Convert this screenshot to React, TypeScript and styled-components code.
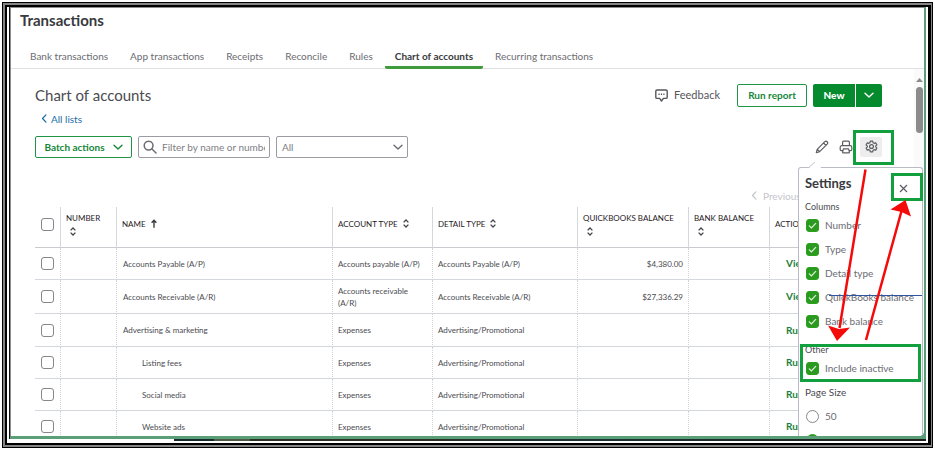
import React from "react";
import styled, { createGlobalStyle, css } from "styled-components";

const GlobalStyle = createGlobalStyle`
  *, *::before, *::after { box-sizing: border-box; }
  body { margin: 0; background: #fff; }
  body, button, input, select { font-family: Lato, "Open Sans", sans-serif; }
  button, input, select { margin: 0; padding: 0; }
`;

const Page = styled.div`
  height: 100vh;
  padding: 2px 2px 3px;
  display: flex;
`;

const OuterFrame = styled.div`
  flex: 1;
  min-width: 0;
  display: flex;
  border: 1px solid #000;
  padding: 2px 1px 2px 2px;
  background: #858585;
`;

const InnerFrame = styled.div`
  flex: 1;
  min-width: 0;
  display: flex;
  flex-direction: column;
  border: solid #000;
  border-width: 2px 3px 2px 2px;
  padding: 0 2px 2px;
  background: #fff;
`;

const Window = styled.main`
  position: relative;
  flex: 1;
  min-height: 0;
  display: flex;
  flex-direction: column;
  overflow: hidden;
  border-left: 1px solid #111;
  background: #5b9f78;
  padding: 0 2px 3px 0;
`;

const Screen = styled.div`
  flex: 1;
  min-height: 0;
  display: flex;
  flex-direction: column;
  position: relative;
  overflow: hidden;
  background: #fff;
  border: solid #8c8c8c;
  border-width: 1px 0 0 1px;
  border-bottom-right-radius: 5px;
`;

const Taskbar = styled.div`
  height: 2px;
  margin-left: 165px;
  background: linear-gradient(90deg, #122a2c 0 40px, #4c5a44 40px 76px, #2b2f25 76px 35%, #1b3436 50%, #20201c);
`;

const PageTitle = styled.h1`
  margin: 0;
  padding: 2px 9px 1px;
  font-size: 15px;
  line-height: 20px;
  font-weight: 700;
  color: #393a3d;
`;

const Tabs = styled.nav`
  display: flex;
  gap: 2px;
  height: 38px;
  padding-left: 9px;
  border-bottom: 1px solid #dfe0e2;
`;

const Tab = styled.a<{ $active?: boolean }>`
  height: 38px;
  padding: 17px 10px 0;
  font-size: 10px;
  line-height: 16px;
  white-space: nowrap;
  text-decoration: none;
  color: #6b6c72;
  border-bottom: 3px solid transparent;
  ${(p) =>
    p.$active &&
    css`
      color: #393a3d;
      font-weight: 700;
      border-bottom-color: #3f9b3b;
      border-radius: 0 0 2px 2px;
    `}
`;

const Body = styled.section`
  flex: 1;
  min-height: 0;
  display: flex;
`;

const Content = styled.div`
  flex: 1;
  min-width: 0;
  padding: 14px 32px 0 24px;
  overflow: hidden;
`;

const Scrollbar = styled.div`
  width: 10px;
  display: flex;
  flex-direction: column;
  align-items: center;
  gap: 4px;
  padding-top: 8px;
  background: #fafafa;
`;

const Thumb = styled.div`
  width: 7px;
  height: 46px;
  border-radius: 4px;
  background: #8b8b8b;
`;

const Row = styled.div`
  display: flex;
  align-items: center;
`;

const HeadingRow = styled(Row)`
  height: 24px;
`;

const Heading = styled.h2`
  margin: 0;
  flex: 1;
  font-size: 15px;
  line-height: 24px;
  font-weight: 400;
  color: #4a4b50;
`;

const FeedbackButton = styled.button`
  display: flex;
  align-items: center;
  gap: 6px;
  margin-right: 17px;
  border: 0;
  background: none;
  color: #55565b;
  font-size: 11px;
  line-height: 16px;
`;

const OutlineButton = styled.button<{ $width: number; $tall?: boolean }>`
  display: flex;
  align-items: center;
  justify-content: center;
  gap: 8px;
  width: ${(p) => p.$width}px;
  height: ${(p) => (p.$tall ? 23 : 22)}px;
  border: 1px solid #1f9444;
  border-radius: 2px;
  background: #fff;
  color: #16873a;
  font-size: 10px;
  font-weight: 700;
  white-space: nowrap;
`;

const SplitButton = styled.div`
  display: flex;
  gap: 1px;
  height: 23px;
  margin-left: 6px;
  border-radius: 2px;
  overflow: hidden;
`;

const SolidButton = styled.button<{ $width: number }>`
  display: flex;
  align-items: center;
  justify-content: center;
  width: ${(p) => p.$width}px;
  border: 0;
  background: #068a2e;
  color: #fff;
  font-size: 10px;
  font-weight: 900;
`;

const BackLink = styled.a`
  display: inline-flex;
  align-items: center;
  gap: 2px;
  margin: 3px 0 0 5px;
  font-size: 10px;
  line-height: 16px;
  text-decoration: none;
  color: #1b6fa5;
`;

const Toolbar = styled(Row)`
  gap: 6px;
  margin-top: 9px;
  height: 22px;
`;

const Field = styled.label`
  display: flex;
  align-items: center;
  gap: 5px;
  width: 132px;
  height: 22px;
  padding: 0 4px;
  border: 1px solid #9a9ca1;
  border-radius: 2px;
  color: #6b6c72;
`;

const SearchInput = styled.input`
  flex: 1;
  min-width: 0;
  border: 0;
  outline: 0;
  background: none;
  font-size: 10px;
  &::placeholder { color: #7d7e83; opacity: 1; }
`;

const Select = styled.select`
  flex: 1;
  appearance: none;
  border: 0;
  outline: 0;
  background: none;
  color: #7d7e83;
  font-size: 10px;
  padding-left: 1px;
`;

const ToolIcons = styled(Row)`
  margin-left: auto;
  gap: 10px;
  color: #5d5e63;
`;

const IconButton = styled.button<{ $filled?: boolean }>`
  display: flex;
  align-items: center;
  justify-content: center;
  border: 0;
  background: none;
  color: inherit;
  ${(p) =>
    p.$filled &&
    css`
      width: 22px;
      height: 20px;
      margin-left: -3px;
      border-radius: 2px;
      background: #ededed;
    `}
`;

const Pager = styled(Row)`
  justify-content: flex-end;
  height: 16px;
  margin-top: 30px;
`;

const PagerButton = styled.button`
  display: flex;
  align-items: center;
  gap: 4px;
  width: 132px;
  border: 0;
  background: none;
  color: #c3c5c9;
  font-size: 10px;
  line-height: 16px;
`;

const Table = styled.table`
  width: 100%;
  margin-top: 3px;
  table-layout: fixed;
  border-collapse: separate;
  border-spacing: 0;
  color: #4a4b50;
  font-size: 8px;
  line-height: 12px;
`;

const Col = styled.col<{ $width?: number }>`
  width: ${(p) => (p.$width ? `${p.$width}px` : "auto")};
`;

const Th = styled.th<{ $stacked?: boolean }>`
  height: 41px;
  padding: ${(p) => (p.$stacked ? "5px 5px 0" : "11px 5px 0")};
  vertical-align: top;
  text-align: left;
  font-size: 8px;
  line-height: 12px;
  font-weight: 400;
  white-space: nowrap;
  color: #1f2024;
  border-bottom: 1px solid #c9cbcf;
  & + & { border-left: 1px solid #d4d7dc; }
`;

const SortLabel = styled.span<{ $stacked?: boolean }>`
  display: flex;
  gap: ${(p) => (p.$stacked ? 3 : 5)}px;
  flex-direction: ${(p) => (p.$stacked ? "column" : "row")};
  align-items: ${(p) => (p.$stacked ? "flex-start" : "center")};
  svg { margin-left: ${(p) => (p.$stacked ? 4 : 0)}px; }
`;

const BodyRow = styled.tr<{ $group?: boolean }>`
  height: ${(p) => (p.$group ? 33 : 32)}px;
`;

const Td = styled.td<{ $right?: boolean; $indent?: number }>`
  padding: 5px 5px 4px;
  padding-left: ${(p) => p.$indent ?? 5}px;
  text-align: ${(p) => (p.$right ? "right" : "left")};
  border-bottom: 1px solid #d4d7dc;
  & + & { border-left: 1px dotted #cfd2d6; }
`;

const ActionLink = styled.a`
  color: #1d7f3b;
  font-size: 10px;
  font-weight: 700;
  text-decoration: none;
`;

const Tick = styled.input<{ $round?: boolean }>`
  appearance: none;
  display: block;
  flex: none;
  width: 13px;
  height: 13px;
  margin: 0;
  border: 1px solid #85878c;
  border-radius: ${(p) => (p.$round ? "50%" : "3px")};
  background: #fff;
`;

const RowTick = styled(Tick)`
  margin-left: 1px;
`;

const PanelTick = styled(Tick)`
  &:checked { border-color: #2ca01c; background: #2c9a20; }
`;

const Panel = styled.aside`
  position: absolute;
  top: 159px;
  right: 1px;
  bottom: 0;
  width: 125px;
  padding: 6px;
  border: solid #b9bcc4;
  border-width: 1px 1px 0 1px;
  border-radius: 3px 3px 0 0;
  background: #fff;
  color: #6b6c72;
`;

const PanelPointer = styled.svg`
  position: absolute;
  left: 9px;
  top: -7px;
`;

const PanelHeader = styled(Row)`
  justify-content: space-between;
  align-items: flex-start;
  height: 20px;
  padding-right: 8px;
`;

const PanelTitle = styled.h3`
  margin: 0;
  font-size: 13px;
  line-height: 18px;
  font-weight: 700;
  color: #393a3d;
`;

const CloseButton = styled(IconButton)`
  height: 28px;
`;

const Group = styled.fieldset`
  margin: 0;
  padding: 0;
  border: 0;
`;

const Legend = styled.legend<{ $large?: boolean }>`
  padding: ${(p) => (p.$large ? "6px 0" : "7px 0 0")};
  font-size: ${(p) => (p.$large ? 10 : 9)}px;
  line-height: 12px;
  color: #4a4b50;
`;

const Option = styled.label`
  display: flex;
  align-items: center;
  gap: 6px;
  height: 24px;
  padding-left: 1px;
  font-size: 10px;
  white-space: nowrap;
`;

const TickCell = styled.span`
  display: grid;
  place-items: center;
  > * { grid-area: 1 / 1; }
  svg { pointer-events: none; }
`;

const OtherGroup = styled(Group)`
  margin-top: 3px;
`;

const TightLegend = styled(Legend)`
  padding: 8px 0 0;
`;

const Annotations = styled.svg`
  position: absolute;
  top: 0;
  right: 0;
  pointer-events: none;
`;

const Chevron = ({ dir = "down", size = 10 }: { dir?: "down" | "left"; size?: number }) => (
  <svg width={size} height={size} viewBox="0 0 10 10" fill="none" stroke="currentColor" strokeWidth="1.4" strokeLinecap="round" strokeLinejoin="round" aria-hidden>
    <path d={dir === "down" ? "M1 3.2 5 7 9 3.2" : "M6.6 1 2.8 5l3.8 4"} />
  </svg>
);

const SortIcon = () => (
  <svg width="6" height="9" viewBox="0 0 6 9" fill="none" stroke="#44454a" strokeWidth="1.3" aria-hidden>
    <path d="M.6 3.4 3 1l2.4 2.4M.6 5.6 3 8l2.4-2.4" />
  </svg>
);

const ArrowUpIcon = () => (
  <svg width="6" height="9" viewBox="0 0 6 9" fill="none" stroke="#393a3d" strokeWidth="1.4" aria-hidden>
    <path d="M3 8.8V1.2M.6 3.8 3 1.2l2.4 2.6" />
  </svg>
);

const CheckMark = () => (
  <svg width="9" height="9" viewBox="0 0 9 9" fill="none" stroke="#dff5dc" strokeWidth="1.2" strokeLinecap="round" aria-hidden>
    <path d="M1.3 4.9 3.4 7l4.3-4.6" />
  </svg>
);

type Account = { name: string; child?: boolean; group?: boolean; type: string; detail: string; balance?: string; action: string };

const accounts: Account[] = [
  { name: "Accounts Payable (A/P)", type: "Accounts payable (A/P)", detail: "Accounts Payable (A/P)", balance: "$4,380.00", action: "View register" },
  { name: "Accounts Receivable (A/R)", type: "Accounts receivable (A/R)", detail: "Accounts Receivable (A/R)", balance: "$27,336.29", action: "View register" },
  { name: "Advertising & marketing", group: true, type: "Expenses", detail: "Advertising/Promotional", action: "Run report" },
  { name: "Listing fees", child: true, type: "Expenses", detail: "Advertising/Promotional", action: "Run report" },
  { name: "Social media", child: true, type: "Expenses", detail: "Advertising/Promotional", action: "Run report" },
  { name: "Website ads", child: true, type: "Expenses", detail: "Advertising/Promotional", action: "Run report" },
];

const tabs = ["Bank transactions", "App transactions", "Receipts", "Reconcile", "Rules", "Chart of accounts", "Recurring transactions"];
const columnOptions = ["Number", "Type", "Detail type", "QuickBooks balance", "Bank balance"];

const CheckOption = ({ label }: { label: string }) => (
  <Option>
    <TickCell>
      <PanelTick type="checkbox" defaultChecked />
      <CheckMark />
    </TickCell>
    {label}
  </Option>
);

const SettingsPanel = () => (
  <Panel aria-label="Settings">
    <PanelPointer width="16" height="8" viewBox="0 0 16 8" aria-hidden>
      <path d="M0 8 8 0l6 8z" fill="#fff" />
      <path d="M0 7 7 1" stroke="#c3c5cb" fill="none" />
    </PanelPointer>
    <PanelHeader>
      <PanelTitle>Settings</PanelTitle>
      <CloseButton aria-label="Close">
        <svg width="9" height="9" viewBox="0 0 9 9" stroke="#5d5e63" strokeWidth="1.2" aria-hidden>
          <path d="m1 1 7 7M8 1 1 8" />
        </svg>
      </CloseButton>
    </PanelHeader>
    <Group>
      <Legend>Columns</Legend>
      {columnOptions.map((o) => (
        <CheckOption key={o} label={o} />
      ))}
    </Group>
    <OtherGroup>
      <TightLegend>Other</TightLegend>
      <CheckOption label="Include inactive" />
    </OtherGroup>
    <Group>
      <Legend $large>Page Size</Legend>
      <Option>
        <PanelTick $round type="radio" name="size" />
        50
      </Option>
      <Option>
        <PanelTick $round type="radio" name="size" aria-label="75" defaultChecked />
      </Option>
    </Group>
  </Panel>
);

export default function App() {
  return (
    <Page>
      <GlobalStyle />
      <OuterFrame>
        <InnerFrame>
          <Window>
            <Screen>
              <PageTitle>Transactions</PageTitle>
              <Tabs>
                {tabs.map((t) => (
                  <Tab key={t} href="#" $active={t === "Chart of accounts"}>
                    {t}
                  </Tab>
                ))}
              </Tabs>
              <Body>
                <Content>
                  <HeadingRow>
                    <Heading>Chart of accounts</Heading>
                    <FeedbackButton>
                      <svg width="13" height="13" viewBox="0 0 13 13" fill="none" stroke="currentColor" strokeWidth="1.4" strokeLinejoin="round" aria-hidden>
                        <path d="M2 1h9a1.2 1.2 0 0 1 1.2 1.2v6A1.2 1.2 0 0 1 11 9.4H8.400L6.500 12 4.600 9.400H2A1.200 1.200 0 0 1 .8 8.200v-6A1.200 1.200 0 0 1 2 1z" />
                        <path d="M3.500 5.200h1.200M5.900 5.200h1.200M8.300 5.200h1.200" />
                      </svg>
                      Feedback
                    </FeedbackButton>
                    <OutlineButton $width={70} $tall>Run report</OutlineButton>
                    <SplitButton>
                      <SolidButton $width={42}>New</SolidButton>
                      <SolidButton $width={26} aria-label="More new options">
                        <Chevron />
                      </SolidButton>
                    </SplitButton>
                  </HeadingRow>
                  <BackLink href="#">
                    <Chevron dir="left" size={9} />
                    All lists
                  </BackLink>
                  <Toolbar>
                    <OutlineButton $width={97}>
                      Batch actions
                      <Chevron />
                    </OutlineButton>
                    <Field>
                      <svg width="14" height="14" viewBox="0 0 14 14" fill="none" stroke="currentColor" strokeWidth="1.500" strokeLinecap="round" aria-hidden>
                        <circle cx="5.600" cy="5.600" r="4.400" />
                        <path d="m9 9 4 4" />
                      </svg>
                      <SearchInput placeholder="Filter by name or number" aria-label="Filter by name or number" />
                    </Field>
                    <Field>
                      <Select aria-label="Account type" defaultValue="All">
                        <option>All</option>
                      </Select>
                      <Chevron />
                    </Field>
                    <ToolIcons>
                      <IconButton aria-label="Edit">
                        <svg width="14" height="14" viewBox="0 0 14 14" fill="none" stroke="currentColor" strokeWidth="1.200" strokeLinejoin="round" aria-hidden>
                          <path d="M1.300 12.700 2.200 9.300 9.800 1.700a1.700 1.700 0 0 1 2.400 2.400L4.600 11.700zM8.600 3l2.400 2.400M2.400 9.400l2.200 2.200" />
                        </svg>
                      </IconButton>
                      <IconButton aria-label="Print">
                        <svg width="14" height="14" viewBox="0 0 14 14" fill="none" stroke="currentColor" strokeWidth="1.200" strokeLinejoin="round" aria-hidden>
                          <path d="M3.600 5.600V2.200A1 1 0 0 1 4.600 1.200h4.800a1 1 0 0 1 1 1v3.400M3.400 10.600H2.200a1 1 0 0 1-1-1V7.200a1.600 1.600 0 0 1 1.600-1.600h8.400a1.600 1.600 0 0 1 1.600 1.600v2.400a1 1 0 0 1-1 1h-1.200M4.400 8.800h5.200l.8 3.400a.6.6 0 0 1-.6.600H4.200a.6.6 0 0 1-.6-.6z" />
                        </svg>
                      </IconButton>
                      <IconButton $filled aria-label="Settings">
                        <svg width="13" height="13" viewBox="0 0 24 24" fill="none" stroke="currentColor" strokeWidth="2.200" strokeLinejoin="round" aria-hidden>
                          <path d="M9.800 2h4.400l.7 3.100 1.900 1.100 3-.9 2.200 3.800-2.300 2.100v1.600l2.300 2.100-2.200 3.800-3-.9-1.900 1.100-.7 3.100H9.800l-.7-3.100-1.900-1.100-3 .9L2 14.900l2.300-2.100v-1.600L2 9.100l2.200-3.800 3 .9 1.900-1.100z" />
                          <circle cx="12" cy="12" r="3.600" />
                        </svg>
                      </IconButton>
                    </ToolIcons>
                  </Toolbar>
                  <Pager>
                    <PagerButton>
                      <Chevron dir="left" size={9} />
                      Previous
                    </PagerButton>
                  </Pager>
                  <Table>
                    <colgroup>
                      <Col $width={25} />
                      <Col $width={56} />
                      <Col />
                      <Col $width={100} />
                      <Col $width={145} />
                      <Col $width={111} />
                      <Col $width={81} />
                      <Col $width={113} />
                    </colgroup>
                    <thead>
                      <tr>
                        <Th><RowTick type="checkbox" aria-label="Select all accounts" /></Th>
                        <Th $stacked><SortLabel $stacked>NUMBER<SortIcon /></SortLabel></Th>
                        <Th><SortLabel>NAME<ArrowUpIcon /></SortLabel></Th>
                        <Th><SortLabel>ACCOUNT TYPE<SortIcon /></SortLabel></Th>
                        <Th><SortLabel>DETAIL TYPE<SortIcon /></SortLabel></Th>
                        <Th $stacked><SortLabel $stacked>QUICKBOOKS BALANCE<SortIcon /></SortLabel></Th>
                        <Th $stacked><SortLabel $stacked>BANK BALANCE<SortIcon /></SortLabel></Th>
                        <Th>ACTION</Th>
                      </tr>
                    </thead>
                    <tbody>
                      {accounts.map((a) => (
                        <BodyRow key={a.name} $group={a.group}>
                          <Td><RowTick type="checkbox" aria-label={`Select ${a.name}`} /></Td>
                          <Td />
                          <Td $indent={a.child ? 25 : 6}>{a.name}</Td>
                          <Td>{a.type}</Td>
                          <Td>{a.detail}</Td>
                          <Td $right>{a.balance}</Td>
                          <Td />
                          <Td $indent={16}><ActionLink href="#">{a.action}</ActionLink></Td>
                        </BodyRow>
                      ))}
                    </tbody>
                  </Table>
                </Content>
                <Scrollbar aria-hidden>
                  <svg width="7" height="6" viewBox="0 0 7 6"><path d="M3.500 1 7 5H0z" fill="#8b8b8b" /></svg>
                  <Thumb />
                </Scrollbar>
              </Body>
              <SettingsPanel />
              <Annotations width="140" height="400" viewBox="784 8 140 400" fill="none" aria-hidden>
                <path d="M829 295.500H922" stroke="#2f55a0" />
                <g stroke="#12a03f" strokeWidth="3">
                  <rect x="854.500" y="131.500" width="38" height="32" />
                  <rect x="892.500" y="174.500" width="29" height="25" />
                  <rect x="801.500" y="345.500" width="118" height="35" />
                </g>
                <path d="M865.500 169.500 839.500 328M866 340 901.500 211" stroke="#f50a0a" strokeWidth="2.500" />
                <path d="M837 341 828 325.500l11 3.500 11-1.500zM905.500 200 911 216.500l-9.500-4.500-11-2.500z" fill="#f50a0a" />
              </Annotations>
            </Screen>
          </Window>
          <Taskbar />
        </InnerFrame>
      </OuterFrame>
    </Page>
  );
}
